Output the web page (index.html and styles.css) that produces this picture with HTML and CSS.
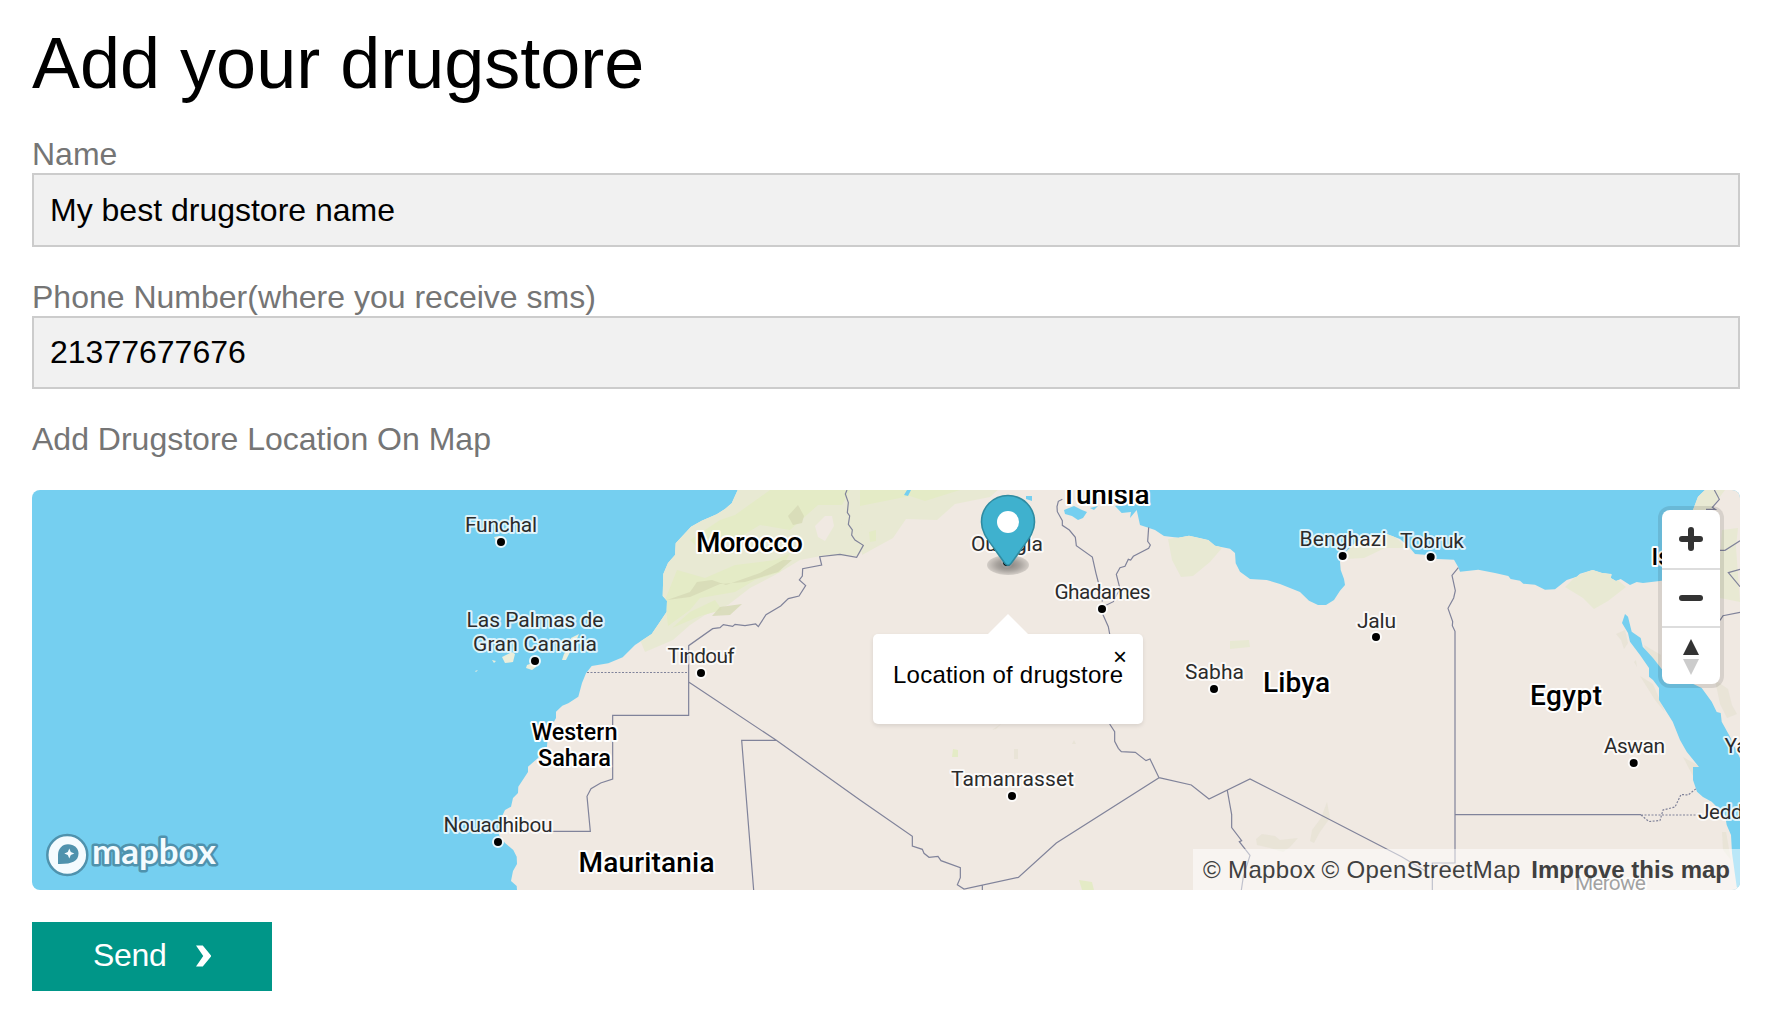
FILE: index.html
```html
<!DOCTYPE html>
<html lang="en">
<head>
<meta charset="utf-8">
<title>Add your drugstore</title>
<link rel="stylesheet" href="styles.css">
</head>
<body>
<form class="page">
  <h1 class="title">Add your drugstore</h1>
  <label class="label" for="name">Name</label>
  <input class="field" id="name" type="text" value="My best drugstore name">
  <label class="label" for="phone">Phone Number(where you receive sms)</label>
  <input class="field field-phone" id="phone" type="text" value="21377677676">
  <span class="label label-map">Add Drugstore Location On Map</span>

  <div class="map">
    <svg class="map-canvas" viewBox="32 490 1708 400" aria-label="Map of North Africa">
      <defs>
        <radialGradient id="pin-shadow"><stop offset="0" stop-opacity=".45"/><stop offset=".55" stop-opacity=".3"/><stop offset="1" stop-opacity=".12"/></radialGradient>
        <clipPath id="land-clip"><use href="#land"/></clipPath>
      </defs>
      <rect class="water" x="32" y="490" width="1708" height="400"/>
      <path id="land" class="land" d="M737.7 490 731.7 503.3 725 509 716.7 514.3 701.7 520.7 691 526.7 675.7 543.3 675 555 668 563 663.3 574 662.7 596 667 600.7 666.7 611.7 660 621.7 651.7 634 635 645 622.7 657.3 608.3 663.3 591.7 666 586 673.3 582 683 578.3 696.7 568.3 703.3 562.3 705.7 556 711.7 556 718 548 733 547 746.7 538 758 528 766.7 528 772 518.3 786.7 518 793 513 798 511 806.7 505 810 501.7 817 500.7 826.7 499 835 505 843 513.3 850 516.7 856.7 517 864 513 871 511 881 516.7 886 517 890H1740V490H1705L1698 496.7 1693 510 1680 570 1661.7 580.7 1643 583 1636.7 582 1630 585 1620.7 579 1616 581 1610.7 578 1611.7 574 1602 573 1592.7 570 1580 573.7 1576.7 576.7 1566.7 580 1555 589.3 1545 589.7 1535 584.7 1523.3 583.7 1520 580.7 1510.7 579 1508.3 576 1495 573 1478.3 569.7 1460 571.7 1458.3 567.3 1454 559.7 1436.7 559 1428 555 1415 554 1410 548 1400 539 1386.7 534 1367 537 1355 543 1343 555 1340 561.7 1340.7 570 1344 579 1345 585 1340 590.7 1334 600 1326 605 1318 605 1309 600.7 1300 592 1280 584 1266.7 580 1250 579 1240 571.7 1235.7 563.3 1235 553 1230 548.7 1215 545.7 1208.3 540 1189 535.7 1178.3 537.7 1164 536 1155 530 1148.3 527.7 1140 525 1136.7 510 1130 518 1131 512 1121.7 513 1115 506 1128 503 1131 490Z"/>
      <g clip-path="url(#land-clip)">
        <path class="green soft" d="M730 480H900L868 545 858 556 826 555 800 560 775 575 750 588 728 605 705 615 690 625 673 640 645 652 640 640 655 600 655 560 690 520Z"/>
        <path class="green" d="M770 490 850 490 842 505 818 505 790 530 760 525 735 540 700 550 690 540 720 520 735 515ZM677 570 705 578 735 565 775 560 790 553 780 572 755 580 735 592 700 598 690 610 668 626 665 600ZM672 628 700 616 722 610 715 600 690 612Z"/>
        <path class="green-dark" d="M667 600 690 592 697 582 712 580 726 585 760 573 783 560 792 560 778 572 745 582 720 584 690 597ZM793 525 788 516 798 505 804 516 802 523ZM720 607 742 604 730 615 712 616Z"/>
        <path class="land" d="M815 526 825 516 832 516 834 526 825 541 818 537Z"/>
        <path class="green soft" d="M860 488H1000L990 497 955 504 937 520 906 519 893 538 862 555ZM1168 539 1190 535 1208 540 1222 548 1210 562 1193 576 1181 577 1172 560ZM1230 641 1249 640 1250 647 1230 649ZM1348 547 1390 533 1408 548 1385 548 1364 558 1345 559ZM1565 587 1575 577 1593 569 1612 575 1626 587 1608 601 1594 609 1583 598ZM1697 490H1725L1710 510 1698 520 1690 505ZM1722 530 1738 528 1736 547 1740 602 1720 598 1720 560Z"/>
        <path class="green" d="M860 490H960L925 501 910 496 880 502 860 506ZM869 532 876 530 876 541 870 542ZM953 749 958 750 958 757 952 757ZM1079 880 1092 882 1094 890H1082Z"/>
        <path class="shade" d="M992 730 1001 724 996 729ZM1014 749H1018V759H1014ZM1074 740 1076 744H1072ZM1256 839 1262 834 1275 836 1280 840 1298 838 1290 847 1283 852 1270 848 1257 845ZM1327 802 1330 818 1320 832 1314 843 1310 841 1312 830 1321 818ZM1616 634 1625 630 1628 643 1624 649 1621 640ZM1644 645 1661 655 1660 670 1649 661ZM1636 660 1637 667 1634 662ZM1640 676 1653 684 1665 712 1655 700ZM1715 680 1728 689 1732 705 1737 714 1727 718 1720 704ZM1683 757 1699 766 1693 776ZM1722 832 1726 832 1731 860 1723 850Z"/>
      </g>
      <g class="water">
        <path d="M1625 614 1628 616.7 1631.7 631.7 1640.7 638 1642.7 646.7 1653 658 1661.7 669 1701.7 688 1711.7 701.7 1716.7 712 1720.7 713 1721.7 721.7 1730 736.7 1740 758V890L1736.7 886.7 1732 853 1731 835 1726.7 825 1725 815 1711.7 801.7 1703 797 1697 791.7 1693 780V767H1699L1686.7 751.7 1680 740 1672.7 721.7 1659 700V688L1653 680 1649 676.7V668L1640 655 1630 641.7 1628 633 1622 623Z"/>
        <path d="M1064 510 1074 506 1082 510 1087 512 1083 518 1078 520 1072 516 1065 514ZM1026 496H1032V501L1026 499ZM907 490H911L908 496 904 495ZM1090 508 1098 506 1094 510Z"/>
      </g>
      <path class="island" d="M502 657 512 652 515 654 513 662 505 663ZM492 660 496 661 494 663ZM475 671 478 670 476 672ZM527 665 535 662 536 667 532 670 526 668ZM564 654 568 649 570 652 566 660 562 660ZM571 638 579 634 577 639 571 642ZM480 643 485 648 481 648ZM494 537 500 536 501 541 496 541Z"/>

      <g class="border">
        <path transform="translate(430 480) scale(.333333)" d="M1251 30 1246 42 1255 68 1252 98 1259 108 1255 133 1267 150 1265 165 1275 180 1300 196 1280 232 1230 223 1169 230 1175 255 1118 266 1117 288 1108 300 1127 317 1107 348 1075 356 1052 378 1008 404 985 440 977 432 945 437 915 433 908 439 880 434 870 443 848 446 776 497V706H548V897L512 909 483 926 471 949 481 1054H350M776 606 1039 781 1290 960M971 1230 935 781H1039"/>
        <path transform="translate(860 680) scale(.333333)" d="M0 360 157 469V498L187 508 192 520 207 532 234 529 243 542 301 563V593L292 614 312 627 475 592 589 489 897 293 870 237 858 242 826 217 784 215 775 205 764 184V155L749 132M367 614V630M897 293 994 315 1047 357 1170 297 1320 373 1625 530 1700 575M1102 332 1115 404V443L1145 482 1138 485 1170 526 1150 590 1144 630"/>
        <path transform="translate(860 480) scale(.333333)" d="M607 58 595 64 591 80 592 95 607 122V136L628 150 646 172 649 197 697 231 708 280 717 315 727 365M866 142 863 184 871 195 866 205 820 229 812 240 805 238 795 259 780 263 769 283 781 330 771 342 760 365 735 377M728 402 745 440 749 462"/>
        <path transform="translate(1300 480) scale(.333333)" d="M475 263 456 286 466 332 461 354 444 385 458 425 457 437 465 454V1149H397V1230M465 1004H1023M1243 30 1258 58 1237 82 1246 88H1218M1260 211 1275 211 1320 182M1320 268 1285 278 1320 320M1320 397 1269 407 1260 421"/>
        <path class="dotted" d="M587 672.5H689M1641 815H1700M1641 815 1649 821.5 1660 820.5 1663 810 1675 807 1681 794.5 1688 795 1697 788"/>
      </g>

      <g class="dots">
        <circle cx="501" cy="542" r="5"/><circle cx="535" cy="661" r="5"/><circle cx="701" cy="673" r="5"/><circle cx="498" cy="842" r="5"/><circle cx="1102" cy="609" r="5"/><circle cx="1214" cy="689" r="5"/><circle cx="1012" cy="796" r="5"/><circle cx="1342.7" cy="556" r="5"/><circle cx="1430.7" cy="557" r="5"/><circle cx="1376" cy="637" r="5"/><circle cx="1633.7" cy="763" r="5"/><circle cx="1007" cy="562" r="5"/>
      </g>

      <g class="city">
        <text x="465" y="531.7" textLength="72">Funchal</text>
        <text x="466.5" y="626.7" textLength="137">Las Palmas de</text>
        <text x="473" y="651" textLength="124">Gran Canaria</text>
        <text x="667.5" y="663" textLength="67">Tindouf</text>
        <text x="443.5" y="832.3" textLength="109">Nouadhibou</text>
        <text x="971" y="550.7" textLength="72">Ouargla</text>
        <text x="1054.5" y="599.3" textLength="96">Ghadames</text>
        <text x="1185" y="679" textLength="59">Sabha</text>
        <text x="951" y="785.7" textLength="123">Tamanrasset</text>
        <text x="1299.5" y="545.7" textLength="87">Benghazi</text>
        <text x="1400" y="548" textLength="64">Tobruk</text>
        <text x="1357" y="628" textLength="39">Jalu</text>
        <text x="1604" y="753.3" textLength="61">Aswan</text>
        <text x="1724.5" y="753.3">Yanbu</text>
        <text x="1698" y="819" textLength="67">Jeddah</text>
        <text class="faded" x="1575" y="890" textLength="71">Merowe</text>
      </g>
      <g class="country">
        <text x="696" y="551.7" textLength="107">Morocco</text>
        <text x="578.5" y="872" textLength="136">Mauritania</text>
        <text x="1060.5" y="504.3" textLength="89">Tunisia</text>
        <text x="1263" y="691.7" textLength="67">Libya</text>
        <text x="1530" y="705.3" textLength="72">Egypt</text>
        <text class="small" x="531.5" y="740" textLength="86">Western</text>
        <text class="small" x="538" y="765.7" textLength="73">Sahara</text>
        <text class="small" x="1651.5" y="565">Israel</text>
      </g>

      <ellipse cx="1008" cy="565" rx="21" ry="10" fill="url(#pin-shadow)"/>
      <path class="pin" d="M1008 495.5C993 495.5 981.5 507.500 981.500 522 981.500 534 990 542 996 551L1005 563.500Q1008 567 1011 563.500L1020 551C1026 542 1034.500 534 1034.500 522 1034.500 507.500 1023 495.500 1008 495.500Z"/>
      <circle cx="1008" cy="522" r="11" fill="#fff"/>
    </svg>

    <div class="popup">
      <span class="popup-close">×</span>
      <p class="popup-text">Location of drugstore</p>
    </div>

    <div class="controls">
      <button class="control control-in" type="button" aria-label="Zoom in"><svg viewBox="0 0 58 58"><path class="sign" d="M20 29H38M29 20V38"/></svg></button>
      <button class="control" type="button" aria-label="Zoom out"><svg viewBox="0 0 58 58"><path class="sign" d="M20 28H38"/></svg></button>
      <button class="control control-north" type="button" aria-label="Reset north"><svg viewBox="0 0 58 58"><path fill="#333" d="M29 11 37 27H21Z"/><path fill="#ccc" d="M21 31H37L29 47Z"/></svg></button>
    </div>

    <svg class="logo" viewBox="0 0 176 44" aria-label="Mapbox">
      <circle cx="21.300" cy="22" r="20" fill="#f4fbfe" stroke="#4f92ad" stroke-width="2.500"/>
      <path fill="#4f92ad" d="M12 31V22C12 16 16 11.200 22 11.200 28 11.200 32.500 15 32.500 20.500 32.500 28 26 31.300 12 31Z"/>
      <path fill="#f4fbfe" d="M23.300 15.500 24.800 19 28.300 20.500 24.800 22 23.300 25.500 21.800 22 18.300 20.500 21.800 19Z"/>
      <text class="logo-text" x="46" y="31.300" textLength="124" lengthAdjust="spacingAndGlyphs">mapbox</text>
    </svg>

    <div class="attribution"><span>© Mapbox</span> <span>© OpenStreetMap</span> <strong>Improve this map</strong></div>
  </div>

  <button class="send" type="button">Send <svg class="chevron" viewBox="0 0 16 22"><path fill="#fff" d="M0 0H7L16 11 7 22H0L7.500 11Z"/></svg></button>
</form>
</body>
</html>
```
FILE: styles.css
```css
* { box-sizing: border-box; }

body {
  margin: 0;
  background: #fff;
  color: #000;
  font-family: "Liberation Sans", Arial, sans-serif;
  font-size: 32px;
}

.page {
  display: flex;
  flex-direction: column;
  align-items: stretch;
  padding: 22px 32px 0;
}

.title {
  margin: 0 0 32px;
  font-size: 72px;
  font-weight: 400;
  line-height: 82px;
}

.label {
  height: 37px;
  color: #757575;
  line-height: 37px;
}

.field {
  width: 100%;
  height: 74px;
  margin: 0 0 32px;
  padding: 0 16px;
  border: 2px solid #ccc;
  border-radius: 0;
  background: #f1f1f1;
  color: #000;
  font: inherit;
  outline: 0;
}

.field-phone { height: 73px; }
.label-map { margin-bottom: 32px; }

.map {
  position: relative;
  height: 400px;
  border-radius: 8px;
  overflow: hidden;
}

.map-canvas {
  display: block;
  width: 100%;
  height: 100%;
  font-family: Roboto, "Open Sans", sans-serif;
}

.water { fill: #75cff0; }
.land { fill: #f0e9e2; }
.green { fill: #e4ebc6; }
.green.soft { fill: #e8e9d3; }
.green-dark { fill: #d6dab5; opacity: .8; }
.shade { fill: #e5e1d3; opacity: .7; }
.island { fill: #eceedb; }

.border path {
  fill: none;
  stroke: #80839a;
  stroke-width: 1.2px;
  vector-effect: non-scaling-stroke;
}

.border .dotted { stroke-dasharray: 2 1.5; }

.dots circle {
  r: 4px;
  fill: #000;
  stroke: #fff;
  stroke-opacity: .85;
  stroke-width: 4px;
  paint-order: stroke;
}

.city text,
.country text {
  paint-order: stroke;
  stroke: rgba(255, 255, 255, .75);
  stroke-linejoin: round;
  stroke-width: 4px;
}

.city text { fill: #2b2b2b; font-size: 21px; }
.country text { fill: #000; stroke: #fff; font-size: 28px; font-weight: 500; }
.country .small { font-size: 23.5px; }
.city .faded { fill: #444; }

.pin { fill: #3fb1ce; stroke: #2f8ba1; stroke-width: 1.6px; }

.popup {
  position: absolute;
  left: 841px;
  top: 144px;
  width: 270px;
  height: 90px;
  padding: 27px 20px;
  border-radius: 5px;
  background: #fff;
  box-shadow: 0 2px 4px rgba(0, 0, 0, .1);
  font-size: 24px;
}

.popup::before {
  content: "";
  position: absolute;
  left: 115px;
  top: -20px;
  border: 20px solid transparent;
  border-top: 0;
  border-bottom-color: #fff;
}

.popup-text { margin: 0; line-height: 28px; white-space: nowrap; letter-spacing: .23px; }
.popup-close { position: absolute; right: 16px; top: 9px; line-height: 28px; }

.controls {
  position: absolute;
  left: 1630px;
  top: 20px;
  width: 58px;
  border-radius: 8px;
  background: #fff;
  box-shadow: 0 0 0 4px rgba(0, 0, 0, .1);
}

.control {
  display: block;
  width: 58px;
  height: 58px;
  padding: 0;
  border: 0;
  border-bottom: 2px solid #ddd;
  background: none;
}

.control svg { display: block; width: 58px; height: 58px; }
.control-in { height: 60px; }
.control:not(.control-in) { display: flex; align-items: flex-start; }
.control-north { height: 56px; border-bottom: 0; }
.sign { fill: none; stroke: #333; stroke-linecap: round; stroke-width: 6px; }

.logo { position: absolute; left: 14px; top: 343px; width: 176px; height: 44px; }

.logo-text {
  fill: #f4fbfe;
  stroke: #4f92ad;
  stroke-width: 5px;
  stroke-linejoin: round;
  paint-order: stroke;
  font: 700 34px Lato, sans-serif;
}

.attribution {
  position: absolute;
  right: 0;
  bottom: 0;
  display: flex;
  align-items: center;
  width: 547px;
  height: 41px;
  padding: 0 10px;
  background: rgba(255, 255, 255, .5);
  color: #404040;
  font-size: 24px;
  white-space: nowrap;
}

.attribution span { margin-right: 6px; letter-spacing: .35px; }
.attribution strong { margin-left: auto; }

.send {
  display: flex;
  align-items: center;
  width: 240px;
  height: 69px;
  margin-top: 32px;
  padding: 0 61px 2px;
  border: 0;
  background: #009688;
  color: #fff;
  font: inherit;
  letter-spacing: -.3px;
}

.chevron { width: 16px; height: 22px; margin-left: 29px; }
```
